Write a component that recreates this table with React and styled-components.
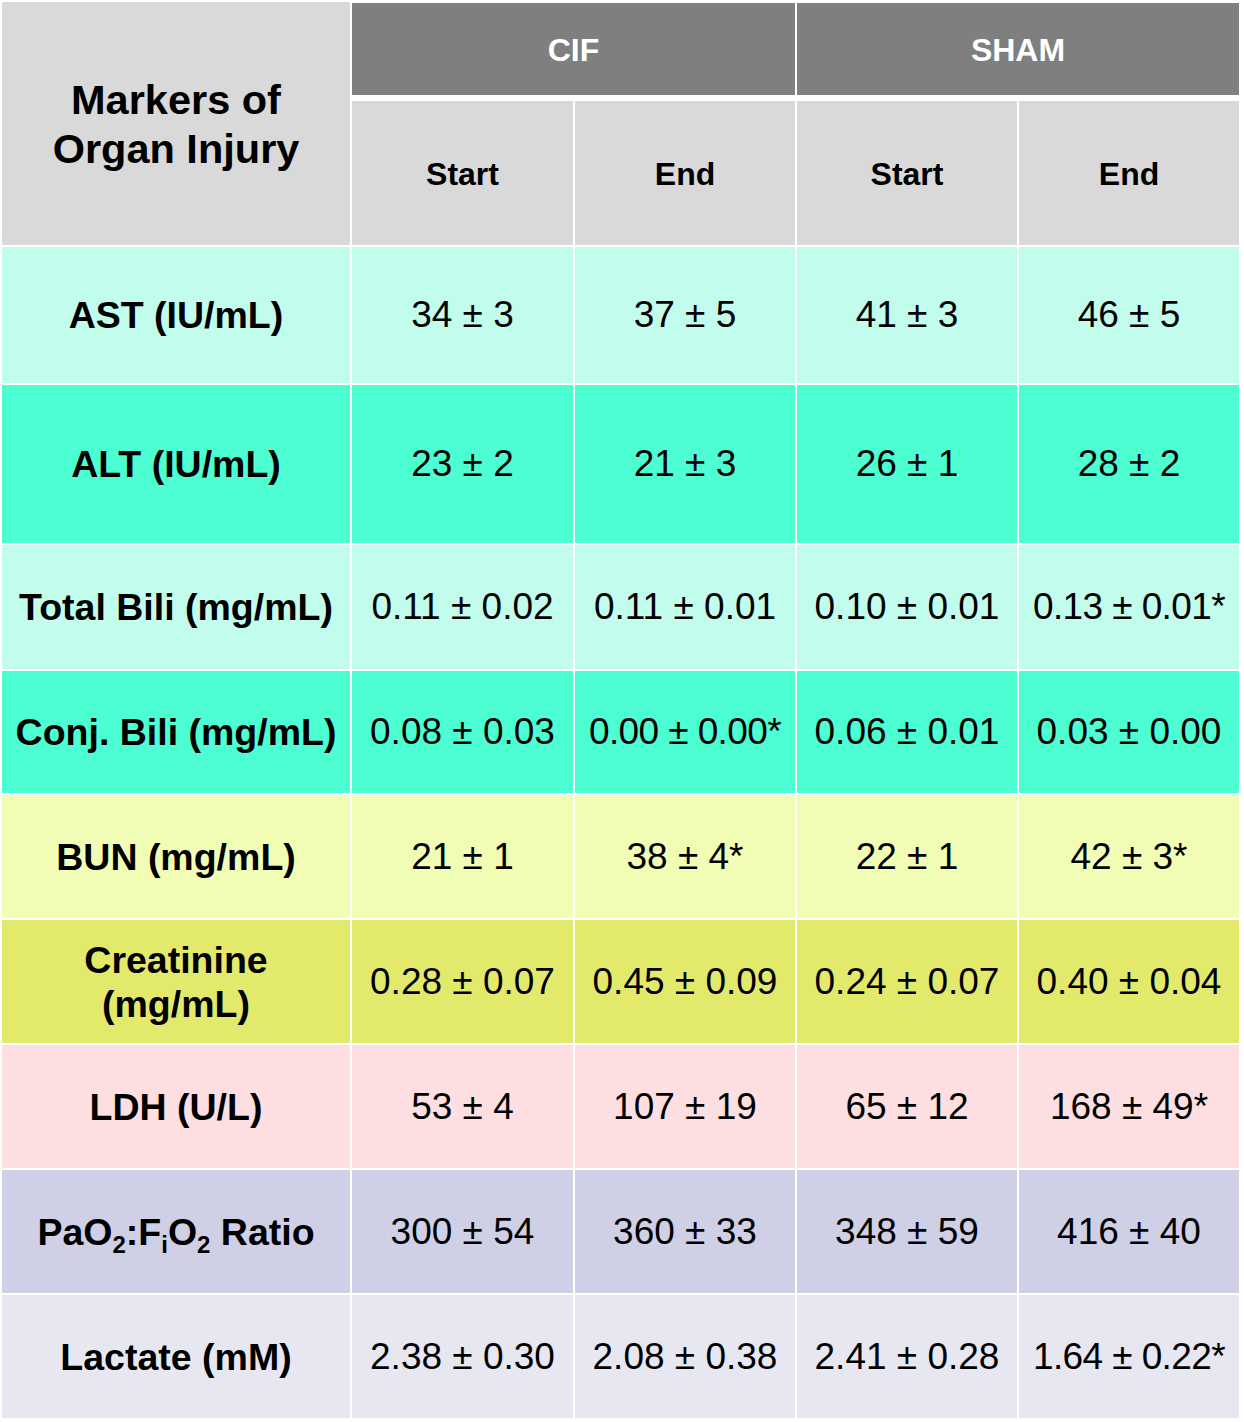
import React from "react"
import styled, { createGlobalStyle } from "styled-components"

const GlobalStyle = createGlobalStyle`
  body {
    margin: 0;
    background: #ffffff;
    font-family: "Liberation Sans", Arial, sans-serif;
  }
`

const rows = [
  { label: "AST (IU/mL)", bg: "#c1fcec", h: 136, values: ["34 ± 3", "37 ± 5", "41 ± 3", "46 ± 5"] },
  { label: "ALT (IU/mL)", bg: "#4cfed2", h: 158, values: ["23 ± 2", "21 ± 3", "26 ± 1", "28 ± 2"] },
  { label: "Total Bili (mg/mL)", bg: "#c1fcec", h: 124, values: ["0.11 ± 0.02", "0.11 ± 0.01", "0.10 ± 0.01", "0.13 ± 0.01*"] },
  { label: "Conj. Bili (mg/mL)", bg: "#4cfed2", h: 122, values: ["0.08 ± 0.03", "0.00 ± 0.00*", "0.06 ± 0.01", "0.03 ± 0.00"] },
  { label: "BUN (mg/mL)", bg: "#f1fdb5", h: 123, values: ["21 ± 1", "38 ± 4*", "22 ± 1", "42 ± 3*"] },
  { label: "Creatinine (mg/mL)", bg: "#e3ea6b", h: 123, values: ["0.28 ± 0.07", "0.45 ± 0.09", "0.24 ± 0.07", "0.40 ± 0.04"], twoLine: true },
  { label: "LDH (U/L)", bg: "#fedfe1", h: 123, values: ["53 ± 4", "107 ± 19", "65 ± 12", "168 ± 49*"] },
  { label: "ratio", bg: "#cfcfe5", h: 123, values: ["300 ± 54", "360 ± 33", "348 ± 59", "416 ± 40"] },
  { label: "Lactate (mM)", bg: "#e7e7f1", h: 123, values: ["2.38 ± 0.30", "2.08 ± 0.38", "2.41 ± 0.28", "1.64 ± 0.22*"] },
]

export default function App() {
  return (
    <>
      <GlobalStyle />
      <Table rowHeights={rows.map((r) => r.h)}>
        <Corner>
          Markers of
          <br />
          Organ Injury
        </Corner>
        <GroupHead>CIF</GroupHead>
        <GroupHead>SHAM</GroupHead>
        <SubHead>Start</SubHead>
        <SubHead>End</SubHead>
        <SubHead>Start</SubHead>
        <SubHead>End</SubHead>
        {rows.map((r) => (
          <React.Fragment key={r.label}>
            <Label bg={r.bg}>
              {r.label === "ratio" ? (
                <span>
                  PaO<Sub>2</Sub>:F<Sub>i</Sub>O<Sub>2</Sub> Ratio
                </span>
              ) : r.twoLine ? (
                <span>
                  Creatinine
                  <br />
                  (mg/mL)
                </span>
              ) : (
                r.label
              )}
            </Label>
            {r.values.map((v, i) => (
              <Value key={i} bg={r.bg} tight={v.endsWith("*") && v.length > 10}>
                {v}
              </Value>
            ))}
          </React.Fragment>
        ))}
      </Table>
    </>
  )
}

const Table = styled.div`
  display: grid;
  grid-template-columns: 348px 221px 220px 220px 220px;
  grid-template-rows: 97px 144px ${(p) => p.rowHeights.map((h) => `${h}px`).join(" ")};
  gap: 2px;
  padding: 2px;
  width: max-content;
  background: #ffffff;
`

const Cell = styled.div`
  display: flex;
  align-items: center;
  justify-content: center;
  text-align: center;
  color: #000000;
  white-space: nowrap;
`

const Corner = styled(Cell)`
  grid-row: 1 / span 2;
  background: #d9d9d9;
  font-size: 41.5px;
  font-weight: 700;
  line-height: 49px;
`

const GroupHead = styled(Cell)`
  grid-column: span 2;
  background: #7f7f7f;
  color: #ffffff;
  font-size: 32px;
  font-weight: 700;
  border-top: 1px solid #ffffff;
  border-bottom: 4px solid #ffffff;
  padding-top: 2px;
`

const SubHead = styled(Cell)`
  background: #d9d9d9;
  font-size: 32px;
  font-weight: 700;
  padding-top: 2px;
`

const Label = styled(Cell)`
  background: ${(p) => p.bg};
  font-size: 37.5px;
  font-weight: 700;
  line-height: 44px;
`

const Sub = styled.sub`
  font-size: 24px;
  line-height: 0;
  vertical-align: -8px;
`

const Value = styled(Cell)`
  background: ${(p) => p.bg};
  font-size: 37px;
  letter-spacing: ${(p) => (p.tight ? "-0.6px" : "0")};
`
